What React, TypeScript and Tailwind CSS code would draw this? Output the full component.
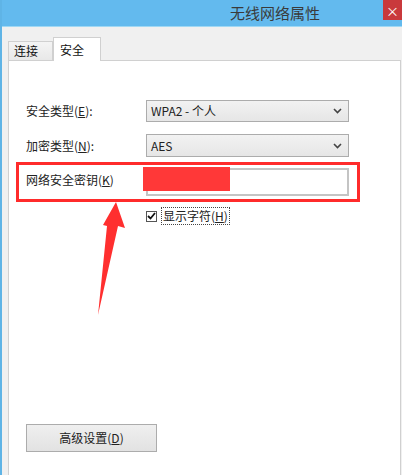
import React from "react";

const font = "font-['Microsoft_YaHei','Noto_Sans_CJK_SC',sans-serif]";

function Chevron() {
  return (
    <svg width="9" height="6" viewBox="0 0 9 6" className="ml-auto mr-[6px]">
      <path d="M1 1 L4.5 4.5 L8 1" fill="none" stroke="#444" strokeWidth="1.6" />
    </svg>
  );
}

function Combo({ value }: { value: string }) {
  return (
    <div className="flex h-full w-[203px] items-center border border-[#acacac] bg-gradient-to-b from-[#f2f2f2] to-[#e6e6e6] pl-[4px] text-[12px] text-[#222]">
      <span>{value}</span>
      <Chevron />
    </div>
  );
}

export default function App() {
  return (
    <div className={`relative h-[475px] w-[402px] overflow-hidden border-l-2 border-[#5fb4e6] bg-[#f0f0f0] ${font}`}>
      {/* title bar */}
      <div className="flex h-[27px] items-start border-b border-[#9fd8f4] bg-[#63baee]">
        <div className="pl-[228px] pt-[4px] text-[15px] leading-[18px] text-[#3a3a3a]">无线网络属性</div>
        <div className="ml-auto flex h-[20px] w-[19px] items-center justify-center bg-[#c9393c] text-[13px] leading-none text-white">
          ×
        </div>
      </div>

      <div className="pl-[6px] pr-[0px]">
        {/* tabs */}
        <div className="mt-[9px] flex h-[24px] items-end">
          <div className="flex h-[19px] w-[45px] items-center border border-b-0 border-[#d0d0d0] bg-gradient-to-b from-[#f4f4f4] to-[#e8e8e8] pl-[5px] text-[12px] text-[#111]">
            连接
          </div>
          <div className="relative z-10 -mb-px flex h-[24px] w-[48px] items-start border border-b-0 border-[#d0d0d0] bg-white pl-[6px] pt-[3px] text-[12px] text-[#111]">
            安全
          </div>
        </div>

        {/* panel */}
        <div className="h-[430px] w-[393px] border border-[#d0d0d0] bg-white pl-[17px] text-[12px] text-[#222]">
          <div className="mt-[39px] flex h-[22px] items-center">
            <span className="w-[120px]">
              安全类型(<u>E</u>):
            </span>
            <Combo value="WPA2 - 个人" />
          </div>
          <div className="mt-[12px] flex h-[23px] items-center">
            <span className="w-[120px]">
              加密类型(<u>N</u>):
            </span>
            <Combo value="AES" />
          </div>
          <div className="mt-[11px] flex h-[28px] items-center">
            <span className="w-[120px] -translate-y-[2px]">
              网络安全密钥(<u>K</u>)
            </span>
            <div className="h-full w-[203px] border-2 border-[#c4c4c4] bg-white" />
          </div>
          <div className="mt-[11px] flex h-[18px] items-center pl-[120px]">
            <div className="flex h-[11px] w-[11px] items-center justify-center border border-[#555] bg-white">
              <svg width="9" height="8" viewBox="0 0 9 8">
                <path d="M1 4 L3.5 6.5 L8 1" fill="none" stroke="#111" strokeWidth="1.8" />
              </svg>
            </div>
            <span className="ml-[4px] border border-dotted border-[#444] px-[1px] leading-[16px]">
              显示字符(<u>H</u>)
            </span>
          </div>

          <div className="mt-[199px] flex h-[28px] w-[131px] items-center justify-center border border-[#acacac] bg-gradient-to-b from-[#efefef] to-[#e2e2e2] text-[12px] text-[#222]">
            高级设置(<u>D</u>)
          </div>
        </div>
      </div>

      {/* annotations */}
      <div className="absolute left-[141px] top-[167px] h-[24px] w-[87px] bg-[#ff3838]" />
      <div className="absolute left-[14px] top-[162px] h-[40px] w-[344px] border-[3px] border-[#ff2b2b]" />
      <svg className="absolute left-0 top-0" width="402" height="475" viewBox="0 0 402 475">
        <polygon
          points="114,202 123,228 116,226 96,315 105,226 101,225"
          fill="#ff2f2f"
        />
      </svg>
    </div>
  );
}
